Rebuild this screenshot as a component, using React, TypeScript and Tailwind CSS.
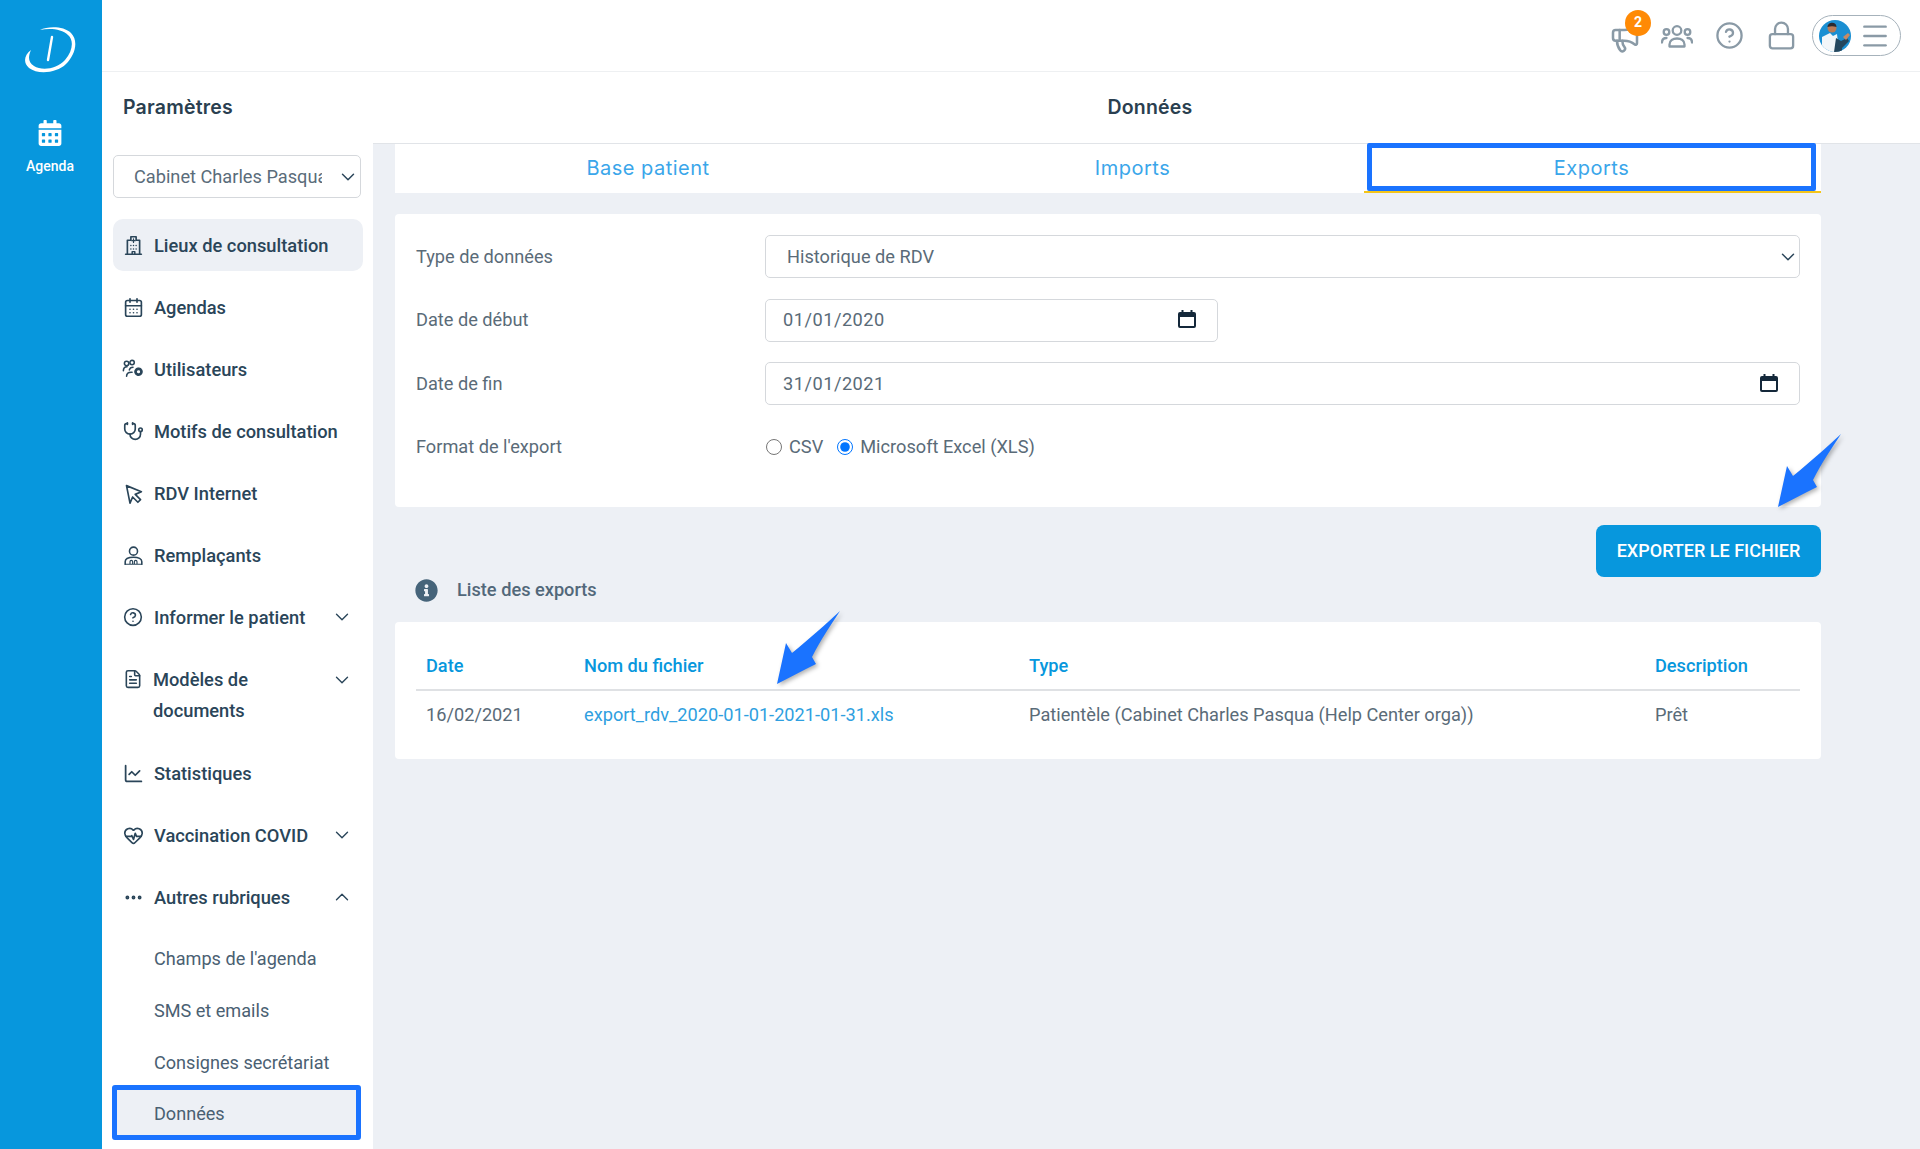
import { CalendarDays, ChevronDown, ChevronUp, CircleHelp, ChartLine, Ellipsis, FileText, HeartPulse, Lock, Megaphone, Menu, Stethoscope } from "lucide-react";
import { FaCalendarAlt, FaInfoCircle } from "react-icons/fa";

const ClinicBuilding = () => (
  <svg viewBox="0 0 24 24" className="w-[21px] h-[21px]" fill="none" stroke="currentColor" strokeWidth="1.9" strokeLinecap="round" strokeLinejoin="round">
    <path d="M3 22h18M5 22V6h4V2h6v4h4v16" />
    <path d="M12 4.5v4M10 6.5h4" strokeWidth="1.4" />
    <path d="M9 12h.01M15 12h.01M9 16h.01M15 16h.01M12 12h.01M12 16h.01M10.5 22v-3h3v3" strokeWidth="1.7" />
  </svg>
);

const UsersCog = () => (
  <svg viewBox="0 0 24 24" className="w-[22px] h-[22px]" fill="none" stroke="currentColor" strokeWidth="1.7" strokeLinecap="round">
    <circle cx="5" cy="6" r="2.4" />
    <circle cx="11" cy="5" r="2.4" />
    <path d="M1.5 14c0-3 2-4.5 4-4.5M8 13c.5-2 2-3 4-3" />
    <path d="M5 20c0-3 2-4.5 5-4.5h1" />
    <circle cx="18" cy="15" r="3.2" strokeWidth="3" strokeDasharray="2 1" />
  </svg>
);

const Pointer = () => (
  <svg viewBox="0 0 24 24" className="w-[21px] h-[21px]" fill="none" stroke="currentColor" strokeWidth="1.9" strokeLinejoin="round">
    <path d="M4 3 21 10l-7 3 6 6-3 3-6-6-3 7Z" />
  </svg>
);

const Substitute = () => (
  <svg viewBox="0 0 24 24" className="w-[21px] h-[21px]" fill="none" stroke="currentColor" strokeWidth="1.8" strokeLinecap="round">
    <circle cx="12" cy="7" r="4.6" />
    <path d="M2.5 22v-3c0-3 3.5-5 9.5-5s9.5 2 9.5 5v3" />
    <path d="M2.5 22h19M8 22v-3a1.5 1.5 0 0 1 3 0v3M13 22v-3a1.5 1.5 0 0 1 3 0v3" strokeWidth="1.3" />
  </svg>
);

const Group = () => (
  <svg viewBox="0 0 32 24" className="w-[32px] h-[24px]" fill="none" stroke="currentColor" strokeWidth="2.3" strokeLinecap="round" strokeLinejoin="round">
    <circle cx="16" cy="6.5" r="4.3" />
    <circle cx="5.5" cy="8" r="2.8" />
    <circle cx="26.5" cy="8" r="2.8" />
    <path d="M8.5 22.5v-2c0-4 3.5-6 7.5-6s7.5 2 7.5 6v2Z" />
    <path d="M1 18.5c0-3 2-4.5 4.5-4.5M31 18.5c0-3-2-4.5-4.5-4.5" />
  </svg>
);

const Logo = () => (
  <svg viewBox="0 0 52 46" className="w-[52px] h-[46px]" fill="white">
    <path d="M16 3C24-1 40-1 47 6c8 8 4 22-5 31-9 9-28 11-37 4-6-5-5-13 2-18-3 7-3 12 3 16 8 5 23 3 31-6 8-9 9-20 3-25C38 2 26 1 16 3Z" />
    <path d="M28 10 24 33" stroke="white" strokeWidth="2.4" strokeLinecap="round" />
  </svg>
);

const Avatar = () => (
  <svg viewBox="0 0 32 32" className="w-[32px] h-[32px] shrink-0">
    <clipPath id="av">
      <circle cx="16" cy="16" r="16" />
    </clipPath>
    <g clipPath="url(#av)">
      <rect width="32" height="32" fill="#1b8fd2" />
      <path d="M3 32V17l8-4 3 3 4-2 2 18Z" fill="#f2f6f9" />
      <path d="M15 32l2-14 5 3 6-3 2 3-7 7v4Z" fill="#24475e" />
      <path d="M24 17l5-4 2 2-4 5Z" fill="#c98a63" />
      <circle cx="13" cy="8" r="4.5" fill="#b97c58" />
      <path d="M8.5 7c0-5 9-6 9 0-3-1-6-1-9 0Z" fill="#2a2a30" />
    </g>
  </svg>
);

const DateIcon = () => (
  <svg viewBox="0 0 18 18" className="w-[18px] h-[18px] mb-[2px]" fill="none" stroke="#14283a" strokeWidth="2">
    <rect x="1" y="3" width="16" height="14" rx="1" />
    <path d="M1 5.5h16" strokeWidth="3" />
    <path d="M4.5 0v3M13.5 0v3" />
  </svg>
);

const Arrow = ({ className }: { className: string }) => (
  <svg viewBox="0 0 64 74" className={className} fill="#1a73ff">
    <path d="M0 73 9 32 15 42C30 30 50 12 63 0 54 14 44 28 35 46L39 53 29 58Z" />
  </svg>
);

const items = [
  { label: "Lieux de consultation", icon: <ClinicBuilding />, active: true },
  { label: "Agendas", icon: <CalendarDays size={21} strokeWidth={1.9} /> },
  { label: "Utilisateurs", icon: <UsersCog /> },
  { label: "Motifs de consultation", icon: <Stethoscope size={21} strokeWidth={1.9} /> },
  { label: "RDV Internet", icon: <Pointer /> },
  { label: "Remplaçants", icon: <Substitute /> },
  { label: "Informer le patient", icon: <CircleHelp size={20} strokeWidth={1.9} />, caret: "down" },
  { label: "Modèles de documents", icon: <FileText size={20} strokeWidth={1.9} />, caret: "down", wrap: true },
  { label: "Statistiques", icon: <ChartLine size={21} strokeWidth={2} /> },
  { label: "Vaccination COVID", icon: <HeartPulse size={21} strokeWidth={1.9} />, caret: "down" },
  { label: "Autres rubriques", icon: <Ellipsis size={21} strokeWidth={2.4} />, caret: "up" },
];

const subItems = ["Champs de l'agenda", "SMS et emails", "Consignes secrétariat"];

function Sidebar() {
  return (
    <aside className="w-[271px] shrink-0 bg-white pl-[11px] text-[#2a4559]">
      <div className="h-[71px] pl-[10px] flex items-center font-['Inter',sans-serif] font-semibold text-[19.5px] tracking-[0.2px] text-[#2a3f50]">
        Paramètres
      </div>
      <div className="mt-[12px] w-[248px] h-[43px] border border-[#d5d8dc] rounded-[5px] pl-[20px] pr-[1px] flex items-center text-[18.2px] text-[#5a6c7a]">
        <span className="w-[188px] overflow-hidden whitespace-nowrap">Cabinet Charles Pasqua (Help Center orga)</span>
        <ChevronDown size={22} strokeWidth={1.6} className="ml-auto text-[#2a4559]" />
      </div>
      <nav className="mt-[21px] flex flex-col gap-[10px]">
        {items.map((item) => (
          <div
            key={item.label}
            className={`w-[250px] flex rounded-[10px] pr-[10px] font-medium text-[18.3px] leading-[31px] ${item.wrap ? "h-[84px] pt-[11px] items-start" : "h-[52px] items-center"} ${item.active ? "bg-[#edf0f5]" : ""}`}
          >
            <span className={`w-[40px] shrink-0 flex justify-center ${item.wrap ? "pt-[5px]" : ""}`}>{item.icon}</span>
            <span className={item.wrap ? "w-[150px]" : "ml-[1px]"}>{item.label}</span>
            {item.caret === "down" && <ChevronDown size={22} strokeWidth={1.5} className={`ml-auto ${item.wrap ? "mt-[5px]" : ""}`} />}
            {item.caret === "up" && <ChevronUp size={22} strokeWidth={1.5} className="ml-auto" />}
          </div>
        ))}
      </nav>
      <div className="mt-[10px] flex flex-col text-[18.1px] text-[#4a6072]">
        {subItems.map((label) => (
          <div key={label} className="h-[52px] pl-[41px] flex items-center">{label}</div>
        ))}
        <div className="-mt-[4px] w-[249px] h-[55px] pl-[37px] pt-[3px] flex items-center -ml-[1px] border-[5px] border-[#1a73ff] rounded-[3px] bg-[#edf0f5]">
          Données
        </div>
      </div>
    </aside>
  );
}

function FormRow({ label, children }: { label: string; children: React.ReactNode }) {
  return (
    <div className="flex items-center h-[43px]">
      <div className="w-[349px] text-[#5a6b78]">{label}</div>
      {children}
    </div>
  );
}

function DateField({ value, className }: { value: string; className: string }) {
  return (
    <div className={`h-[43px] border border-[#d5d8dc] rounded-[5px] pl-[17px] pr-[21px] flex items-center justify-between tracking-[0.5px] text-[#5a6b78] ${className}`}>
      {value}
      <DateIcon />
    </div>
  );
}

export default function App() {
  return (
    <div className="relative w-[1920px] h-[1149px] overflow-hidden flex bg-[#edf0f5] font-['Roboto',sans-serif] text-[18.2px]">
      <div className="w-[102px] shrink-0 bg-[#0797dd] pr-[2px] flex flex-col items-center text-white">
        <div className="mt-[27px]"><Logo /></div>
        <FaCalendarAlt size={26} className="mt-[47px]" />
        <div className="mt-[10px] text-[14px] font-medium">Agenda</div>
      </div>
      <div className="flex-1 flex flex-col">
        <header className="h-[72px] bg-white border-b border-[#eef0f2] flex items-center justify-end pr-[19px] text-[#8a9aa6]">
          <div className="relative w-[52px] h-[70px] flex items-center justify-center">
            <Megaphone size={32} strokeWidth={1.9} className="mt-[5px]" />
            <span className="absolute top-[9px] left-[26px] w-[26px] h-[26px] rounded-full bg-[#ff8a05] text-white text-[14px] font-bold flex items-center justify-center">2</span>
          </div>
          <div className="w-[52px] flex justify-center"><Group /></div>
          <div className="w-[52px] flex justify-center"><CircleHelp size={29} strokeWidth={1.9} /></div>
          <div className="w-[52px] flex justify-center"><Lock size={31} strokeWidth={1.8} /></div>
          <div className="ml-[5px] w-[89px] h-[41px] border border-[#a6b2bb] rounded-full flex items-center pl-[6px]">
            <Avatar />
            <Menu size={32} strokeWidth={1.8} className="ml-[8px]" />
          </div>
        </header>
        <div className="flex-1 flex">
          <Sidebar />
          <main className="flex-1 flex flex-col">
            <div className="h-[72px] shrink-0 bg-white border-b border-[#e1e4e8] pl-[7px] flex items-center justify-center font-['Inter',sans-serif] font-semibold text-[19.5px] tracking-[0.2px] text-[#2a3f50]">
              Données
            </div>
            <div className="pl-[22px] pr-[99px] flex flex-col">
              <div className="h-[49px] bg-white flex text-[#3aa6ea] font-['Inter',sans-serif] text-[20px] tracking-[0.5px]">
                <div className="w-[506px] pb-[1px] flex items-center justify-center">Base patient</div>
                <div className="w-[463px] pb-[1px] flex items-center justify-center">Imports</div>
                <div className="flex-1 -mt-[1px] border-b-2 border-[#f5c518] pl-[3px] pr-[5px]">
                  <div className="h-full pt-[2px] border-[5px] border-[#1a73ff] rounded-[2px] flex items-center justify-center">Exports</div>
                </div>
              </div>
              <section className="mt-[21px] h-[293px] bg-white rounded-[4px] pt-[21px] px-[21px] flex flex-col gap-[20.5px]">
                <FormRow label="Type de données">
                  <div className="flex-1 h-[43px] border border-[#d5d8dc] rounded-[5px] pl-[21px] flex items-center justify-between text-[#5a6b78]">
                    Historique de RDV
                    <ChevronDown size={22} strokeWidth={1.6} className="text-[#2a4559]" />
                  </div>
                </FormRow>
                <FormRow label="Date de début">
                  <DateField value="01/01/2020" className="w-[453px]" />
                </FormRow>
                <FormRow label="Date de fin">
                  <DateField value="31/01/2021" className="flex-1" />
                </FormRow>
                <FormRow label="Format de l'export">
                  <label className="flex items-center text-[#5a6b78]">
                    <input type="radio" name="format" className="w-[16px] h-[16px] m-0 ml-[1px] mr-[7px]" />
                    CSV
                  </label>
                  <label className="flex items-center ml-[14px] text-[#5a6b78]">
                    <input type="radio" name="format" defaultChecked className="w-[16px] h-[16px] m-0 mr-[7px]" />
                    Microsoft Excel (XLS)
                  </label>
                </FormRow>
              </section>
              <div className="mt-[18px] flex justify-end">
                <button className="w-[225px] h-[52px] pb-[2px] rounded-[8px] bg-[#0797dd] text-white font-medium text-[18px]">EXPORTER LE FICHIER</button>
              </div>
              <div className="h-[26px] pl-[20px] flex items-center text-[#52687a] font-medium">
                <FaInfoCircle size={23} className="text-[#46647a]" />
                <span className="ml-[19px]">Liste des exports</span>
              </div>
              <section className="mt-[19px] h-[137px] bg-white rounded-[4px] px-[21px] pt-[21px]">
                <table className="w-full table-fixed text-left">
                  <thead>
                    <tr className="h-[47px] border-b-2 border-[#dfe1e4] text-[#0797dd]">
                      <th className="w-[158px] pl-[10px] font-medium">Date</th>
                      <th className="w-[445px] pl-[10px] font-medium">Nom du fichier</th>
                      <th className="w-[626px] pl-[10px] font-medium">Type</th>
                      <th className="pl-[10px] font-medium">Description</th>
                    </tr>
                  </thead>
                  <tbody>
                    <tr className="h-[48px] text-[#5a6b78]">
                      <td className="pl-[10px]">16/02/2021</td>
                      <td className="pl-[10px] text-[#2f9fe0]">export_rdv_2020-01-01-2021-01-31.xls</td>
                      <td className="pl-[10px]">Patientèle (Cabinet Charles Pasqua (Help Center orga))</td>
                      <td className="pl-[10px]">Prêt</td>
                    </tr>
                  </tbody>
                </table>
              </section>
            </div>
          </main>
        </div>
      </div>
      <Arrow className="absolute left-[1778px] top-[434px] w-[64px] h-[74px] drop-shadow-[2px_2px_2px_rgba(0,0,0,0.3)]" />
      <Arrow className="absolute left-[777px] top-[611px] w-[64px] h-[74px] drop-shadow-[2px_2px_2px_rgba(0,0,0,0.3)]" />
    </div>
  );
}
